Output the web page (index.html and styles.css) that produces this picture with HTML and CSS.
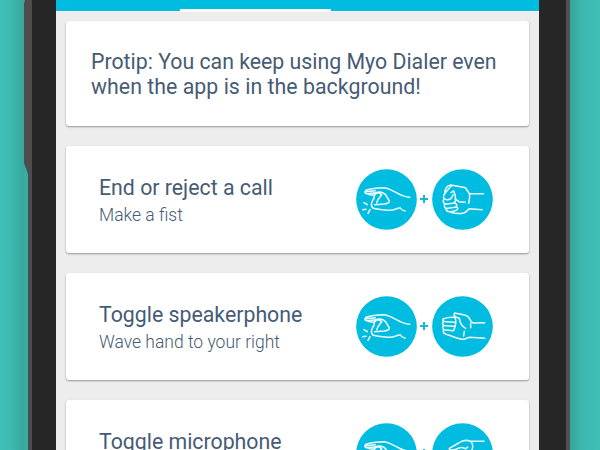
FILE: index.html
```
<!DOCTYPE html>
<html lang="en">
<head>
<meta charset="utf-8">
<title>Myo Dialer</title>
<link rel="stylesheet" href="styles.css">
</head>
<body>
<svg class="defs" aria-hidden="true">
  <symbol id="pinch" viewBox="18 27 183 183">
    <circle class="disc" cx="109.500" cy="118.500" r="91"/>
    <path d="M48 91C61 86 78 83 100 83C116 84 127 92 139 98C151 105 164 111 179 112M48 91C41 96 46 102 53 101L76 98C91 93 102 98 108 106L118 123C119 128 112 131 102 132L74 134M48 95L76 92M53 102C57 106 65 105 74 104M74 104L71 117M75 103C81 97 91 98 95 105M95 104C89 112 83 117 80 128M71 116C65 125 60 139 70 145C82 149 105 150 119 151C133 152 142 142 151 144M151 144C154 150 159 152 165 153"/>
    <path d="M42 128L52 134M38 149L48 148M60 149L54 160"/>
  </symbol>
  <symbol id="fist" viewBox="246 27 183 183">
    <circle class="disc" cx="337.500" cy="118.500" r="91"/>
    <path d="M400 101H358L347 84C338 80 320 79 302 75C288 77 283 91 285 102M304 78C297 84 292 93 285 99C276 110 281 118 290 119C301 120 307 111 309 104M303 98L311 93C316 102 316 111 317 118L327 125L345 127M282 117C276 126 282 133 291 132L308 130C316 127 319 121 315 117M284 133C280 142 286 146 294 145L315 142C324 137 320 129 311 129M288 146C288 156 299 156 311 154L322 149C325 144 322 140 316 141M300 156C312 160 329 162 341 159C348 157 353 151 358 146L396 149M358 101C361 112 357 121 356 130"/>
  </symbol>
  <symbol id="wave" viewBox="246 27 183 183">
    <circle class="disc" cx="337.500" cy="118.500" r="91"/>
    <path d="M404 107L369 108C360 105 361 94 353 88C342 81 327 82 314 78C309 85 316 91 328 94C330 107 336 119 347 124M319 91C304 90 290 91 281 95C275 100 280 104 288 104L313 106M281 104C274 111 278 116 287 116L312 118M280 116C275 124 280 129 288 129L309 131M281 129C277 138 286 142 297 145C310 149 325 155 337 157C349 158 351 151 360 151L404 154M315 92C320 104 317 117 311 130M343 133L341 147M362 109V122"/>
  </symbol>
  <symbol id="wave-out" viewBox="246 27 183 183">
    <circle class="disc" cx="337.500" cy="118.500" r="91"/>
    <path d="M402 82H362C350 77 337 79 326 87L298 103C297 110 310 108 319 106C324 101 335 99 342 102C347 106 350 103 353 99M362 82C369 88 370 98 365 111M319 107C307 114 291 119 280 126C276 133 284 134 291 132L318 121M291 132C280 138 282 145 291 142L322 130M292 142C288 151 297 151 302 149L330 139M302 149C311 160 335 158 350 145L402 128"/>
  </symbol>
</svg>
<div class="stage">
  <div class="backdrop backdrop-left"></div>
  <svg class="rim" viewBox="0 0 8 450" aria-hidden="true"><path d="M0 3L1 0H8V450H4V174L0 163Z"/></svg>
  <div class="bezel"></div>
  <main class="screen">
    <header class="tabs"><span class="tab-indicator"></span></header>
    <section class="card tip"><p>Protip: You can keep using Myo Dialer even<br><span class="second-line">when the app is in the background!</span></p></section>
    <section class="card">
      <div class="copy"><h2>End or reject a call</h2><p>Make a fist</p></div>
      <div class="gesture"><svg class="hand"><use href="#pinch"/></svg><i class="plus"></i><svg class="hand"><use href="#fist"/></svg></div>
    </section>
    <section class="card">
      <div class="copy"><h2>Toggle speakerphone</h2><p>Wave hand to your right</p></div>
      <div class="gesture"><svg class="hand"><use href="#pinch"/></svg><i class="plus"></i><svg class="hand"><use href="#wave"/></svg></div>
    </section>
    <section class="card">
      <div class="copy"><h2>Toggle microphone</h2></div>
      <div class="gesture"><svg class="hand"><use href="#pinch"/></svg><i class="plus"></i><svg class="hand"><use href="#wave-out"/></svg></div>
    </section>
  </main>
  <div class="bezel bezel-right"></div>
  <div class="backdrop backdrop-right"></div>
</div>
</body>
</html>
```
FILE: styles.css
```
* { box-sizing: border-box; }
body { margin: 0; overflow: hidden; font-family: Roboto, "Liberation Sans", sans-serif; color: #465b75; }
.defs { position: absolute; width: 0; height: 0; }
.stage { display: grid; grid-template-columns: 24px 8px 24px 483px 31px 30px; width: 600px; height: 450px; overflow: hidden; background: #37ada4; }
.backdrop-left { background: linear-gradient(90deg, #3ebfb5 0, #3dbcb2 10px, #37a59d 24px); }
.backdrop-right { background: linear-gradient(90deg, #37a49c 0, #3cb7ae 12px, #3ebfb5 30px); }
.rim { display: block; width: 8px; height: 450px; fill: #4d4d4d; }
.bezel { background: #262626; }
.bezel-right { border-right: 4px solid #505050; }
.screen { display: flex; flex-direction: column; height: 450px; overflow: hidden; background: #ededed; }
.tabs { flex: none; display: flex; align-items: flex-end; height: 11px; margin-bottom: 10px; background: #00bce0; box-shadow: 0 1px 0 #f8f8f8; }
.tab-indicator { width: 151px; height: 2px; margin-left: 124px; background: #fff; }
.card { flex: none; display: flex; justify-content: space-between; width: 463px; height: 107px; margin: 0 0 20px 10px; padding: 23px 35px 0 33px; border-radius: 3px; background: #fff; box-shadow: 0 1px 2px rgba(0,0,0,.38); }
.tip { height: 105px; padding: 28px 25px 0; }
.tip p { margin: 0; font-size: 21.3px; line-height: 25px; white-space: nowrap; }
.second-line { letter-spacing: .04px; }
.copy { padding-top: 6px; white-space: nowrap; }
.copy h2 { margin: 0; font-size: 21.3px; font-weight: 400; line-height: 26px; }
.copy p { margin: 2px 0 0; font-size: 17.5px; font-weight: 300; line-height: 25px; }
.gesture { display: flex; align-items: flex-start; width: 138px; }
.hand { flex: none; width: 61px; height: 61px; fill: none; stroke: #effcff; stroke-width: 4.6; stroke-linecap: round; stroke-linejoin: round; }
.disc { fill: #00bce0; stroke: none; }
.plus { flex: none; width: 8px; height: 8px; margin: 26px 4px 0 3px; background: linear-gradient(#16b7d3, #16b7d3) center / 2px 8px no-repeat, linear-gradient(#16b7d3, #16b7d3) center / 8px 2px no-repeat; }
```
